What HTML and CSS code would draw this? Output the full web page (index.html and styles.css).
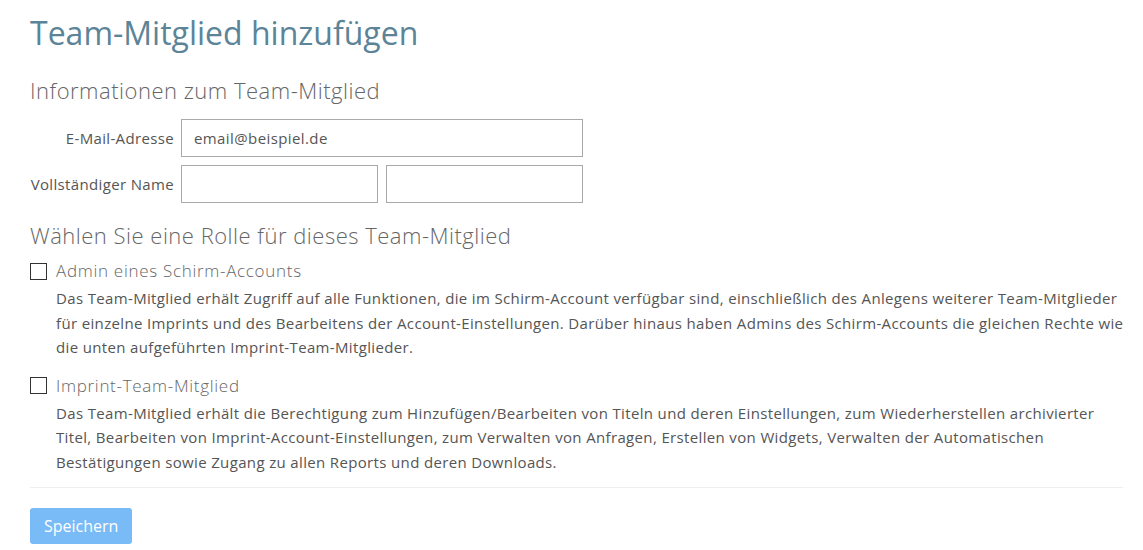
FILE: index.html
```html
<!DOCTYPE html>
<html lang="de">
<head>
    <meta charset="UTF-8">
    <meta name="viewport" content="width=device-width, initial-scale=1.0">
    <title>Team-Mitglied hinzufügen</title>
    <link rel="stylesheet" href="styles.css">
</head>
<body>
    <div class="page">
        <h1 class="page-title">Team-Mitglied hinzufügen</h1>

        <h3 class="section-title">Informationen zum Team-Mitglied</h3>
        <div class="form-grid">
            <label class="field-label" for="email">E-Mail-Adresse</label>
            <div class="field">
                <input type="text" id="email" class="text-input" value="email@beispiel.de">
            </div>
            <label class="field-label" for="first-name">Vollständiger Name</label>
            <div class="field field-split">
                <input type="text" id="first-name" class="text-input">
                <input type="text" id="last-name" class="text-input">
            </div>
        </div>

        <h3 class="section-title role-title">Wählen Sie eine Rolle für dieses Team-Mitglied</h3>

        <div class="role">
            <label class="role-label">
                <span class="checkbox"></span>
                Admin eines Schirm-Accounts
            </label>
            <p class="role-desc">Das Team-Mitglied erhält Zugriff auf alle Funktionen, die im Schirm-Account verfügbar sind, einschließlich des Anlegens weiterer Team-Mitglieder für einzelne Imprints und des Bearbeitens der Account-Einstellungen. Darüber hinaus haben Admins des Schirm-Accounts die gleichen Rechte wie die unten aufgeführten Imprint-Team-Mitglieder.</p>
        </div>

        <div class="role">
            <label class="role-label">
                <span class="checkbox"></span>
                Imprint-Team-Mitglied
            </label>
            <p class="role-desc">Das Team-Mitglied erhält die Berechtigung zum Hinzufügen/Bearbeiten von Titeln und deren Einstellungen, zum Wiederherstellen archivierter Titel, Bearbeiten von Imprint-Account-Einstellungen, zum Verwalten von Anfragen, Erstellen von Widgets, Verwalten der Automatischen Bestätigungen sowie Zugang zu allen Reports und deren Downloads.</p>
        </div>

        <hr class="divider">

        <button class="save-btn" disabled>Speichern</button>
    </div>
</body>
</html>
```

FILE: styles.css
```css
body {
    margin: 0;
    font-family: "Open Sans", Lato, sans-serif;
    color: #555;
    background: #fff;
}

.page {
    padding: 13px 17px 0 30px;
}

.page-title {
    margin: 0 0 23px;
    font-size: 32px;
    line-height: 40px;
    font-weight: 400;
    color: #5b8498;
}

.section-title {
    margin: 0 0 15px;
    font-size: 22px;
    line-height: 28px;
    font-weight: 300;
    letter-spacing: 0.5px;
    color: #666;
}

.role-title {
    margin: 18px 0 10px;
}

.form-grid {
    display: grid;
    grid-template-columns: 144px 402px;
    column-gap: 7px;
    row-gap: 8px;
    align-items: center;
}

.field-label {
    text-align: right;
    white-space: nowrap;
    font-size: 15px;
    letter-spacing: 0.35px;
    color: #555;
}

.field-split {
    display: grid;
    grid-template-columns: 1fr 1fr;
    gap: 8px;
}

.text-input {
    box-sizing: border-box;
    width: 100%;
    height: 38px;
    padding: 0 12px;
    border: 1px solid #a9a9a9;
    border-radius: 0;
    font-family: inherit;
    font-size: 15px;
    letter-spacing: 0.4px;
    color: #555;
}

.role + .role {
    margin-top: 14px;
}

.role-label {
    display: flex;
    align-items: center;
    gap: 9px;
    font-size: 17px;
    line-height: 24px;
    font-weight: 300;
    letter-spacing: 0.7px;
    color: #666;
}

.checkbox {
    box-sizing: border-box;
    width: 17px;
    height: 17px;
    border: 1px solid #333;
    background: #fff;
    flex-shrink: 0;
}

.role-desc {
    margin: 3px 0 0 26px;
    font-size: 15px;
    line-height: 24.5px;
    letter-spacing: 0.35px;
    color: #555;
}

.divider {
    margin: 13px 3px 0 0;
    border: 0;
    border-top: 1px solid #eee;
}

.save-btn {
    margin-top: 20px;
    height: 36px;
    padding: 0 14px;
    border: 0;
    border-radius: 3px;
    background: #79bbf6;
    color: #fff;
    font-family: inherit;
    font-size: 16px;
}
```
